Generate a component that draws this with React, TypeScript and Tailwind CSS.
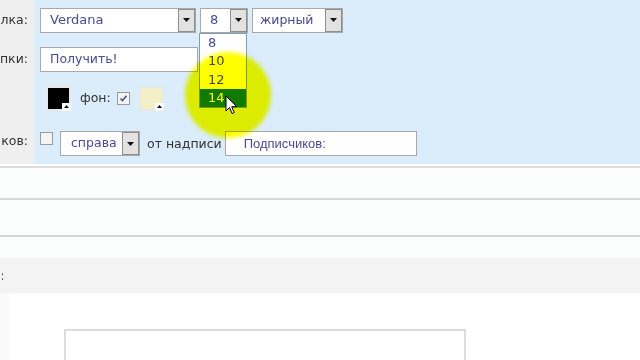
import React from 'react'

const font = { fontFamily: '"DejaVu Sans", Verdana, sans-serif' }

const Arrow = () => (
  <div className="flex h-full w-[17px] items-center justify-center border border-[#8e8e8e] bg-[#e2e2e2]">
    <svg width="7" height="4" viewBox="0 0 7 4">
      <path d="M0 0h7L3.5 4z" fill="#111" />
    </svg>
  </div>
)

const Select = ({ value, className, textClass = 'text-[13px] pl-[9px]' }: { value: string; className: string; textClass?: string }) => (
  <div className={`flex h-[25px] items-center border border-[#a8a8a8] bg-white ${className}`}>
    <span className={`flex-1 truncate text-[#4a4a8e] ${textClass}`}>{value}</span>
    <Arrow />
  </div>
)

const Swatch = ({ color }: { color: string }) => (
  <div className="relative h-[25px] w-[25px] rounded-[2px] border-2 border-[#e6e8ea]" style={{ background: color }}>
    <div className="absolute bottom-[-2px] right-[-2px] flex h-[8px] w-[9px] items-center justify-center bg-white">
      <svg width="5" height="3" viewBox="0 0 5 3">
        <path d="M0 3h5L2.5 0z" fill="#111" />
      </svg>
    </div>
  </div>
)

const Checkbox = ({ checked }: { checked?: boolean }) => (
  <div className="flex h-[13px] w-[13px] items-center justify-center border border-[#9a9a9a] bg-[#f4f4f4]">
    {checked && (
      <svg width="9" height="9" viewBox="0 0 9 9">
        <path d="M1.5 4.5l2 2.2 4-5" stroke="#3a4a9a" strokeWidth="1.5" fill="none" />
      </svg>
    )}
  </div>
)

const Label = ({ text, className }: { text: string; className: string }) => (
  <div className={`flex justify-end bg-[#efefef] pr-[6px] text-[12.5px] text-[#333] ${className}`}>{text}</div>
)

export default function App() {
  return (
    <div className="relative h-[360px] w-[640px] overflow-hidden bg-white" style={font}>
      <div className="grid grid-cols-[34px_1fr]">
        <Label text="лка:" className="h-[40px] items-center" />
        <div className="flex h-[40px] items-center gap-[4px] bg-[#dbecfb] pl-[6px]">
          <Select value="Verdana" className="w-[156px]" />
          <Select value="8" className="w-[48px]" />
          <Select value="жирный" className="w-[91px]" textClass="text-[12.5px] pl-[7px]" />
        </div>

        <Label text="пки:" className="h-[38px] items-center" />
        <div className="flex h-[38px] items-center bg-[#dbecfb] pl-[6px]">
          <div className="flex h-[25px] w-[158px] items-center border border-[#a8a8a8] bg-white pl-[9px] text-[12.5px] text-[#4a4a8e]">
            Получить!
          </div>
        </div>

        <div className="h-[40px] bg-[#efefef]" />
        <div className="flex h-[40px] items-center bg-[#dbecfb] pl-[12px]">
          <Swatch color="#000" />
          <span className="ml-[9px] text-[12.5px] text-[#333]">фон:</span>
          <div className="ml-[6px]">
            <Checkbox checked />
          </div>
          <div className="ml-[9px]">
            <Swatch color="#f3efc6" />
          </div>
        </div>

        <Label text="ков:" className="h-[46px] items-start pt-[14px]" />
        <div className="flex h-[46px] items-start bg-[#dbecfb] pl-[6px] pt-[13px]">
          <div className="mt-[1px]">
            <Checkbox />
          </div>
          <Select value="справа" className="ml-[7px] w-[80px]" textClass="text-[12.5px] pl-[10px]" />
          <span className="ml-[7px] mt-[4px] text-[12.5px] text-[#333]">от надписи</span>
          <div
            className="ml-[3px] flex h-[25px] w-[192px] items-center border border-[#a8a8a8] bg-white pl-[18px] text-[13px] text-[#4a4a8e]"
            style={{ fontFamily: '"Liberation Sans", Arial, sans-serif' }}
          >
            Подписчиков:
          </div>
        </div>
      </div>

      <div className="h-[2px] bg-white" />
      <div className="h-[2px] bg-[#dcdcdc]" />
      <div className="h-[30px] bg-[#fbfcfc]" />
      <div className="h-[2px] bg-[#d6d6d6]" />
      <div className="h-[35px] bg-[#fbfcfc]" />
      <div className="h-[2px] bg-[#d6d6d6]" />
      <div className="h-[21px] bg-[#fbfcfc]" />
      <div className="flex h-[35px] items-center bg-[#f2f3f2]">
        <div className="flex w-[3px] justify-end overflow-hidden text-[13px] text-[#333]">
          <span className="-mr-[2px]">:</span>
        </div>
      </div>
      <div className="flex h-[67px]">
        <div className="w-[10px] bg-[#fafafa]" />
        <div className="ml-[54px] mt-[36px] h-[40px] w-[402px] border-2 border-[#dcdcdc] bg-white" />
      </div>

      {/* dropdown list */}
      <div className="absolute left-[199px] top-[33px] w-[48px] border border-[#7f9db9] bg-white text-[13px]">
        <div className="h-[18px] pl-[8px] leading-[18px] text-[#4a4a8e]">8</div>
        <div className="h-[18px] pl-[8px] leading-[18px] text-[#4a4a8e]">10</div>
        <div className="h-[19px] pl-[8px] leading-[19px] text-[#4a4a8e]">12</div>
        <div className="h-[18px] bg-[#117a00] pl-[8px] leading-[18px] text-white">14</div>
      </div>

      {/* cursor highlight */}
      <div className="absolute left-[185px] top-[52px] h-[86px] w-[86px] rounded-full bg-[#ffff00] mix-blend-multiply blur-[2px]" />

      {/* cursor */}
      <svg className="absolute left-[225px] top-[95px]" width="14" height="20" viewBox="0 0 14 20">
        <path d="M1 1v15l3.5-3.5 2.5 6 2.2-1-2.5-5.8h5z" fill="#fff" stroke="#000" strokeWidth="1" strokeLinejoin="round" />
      </svg>
    </div>
  )
}
